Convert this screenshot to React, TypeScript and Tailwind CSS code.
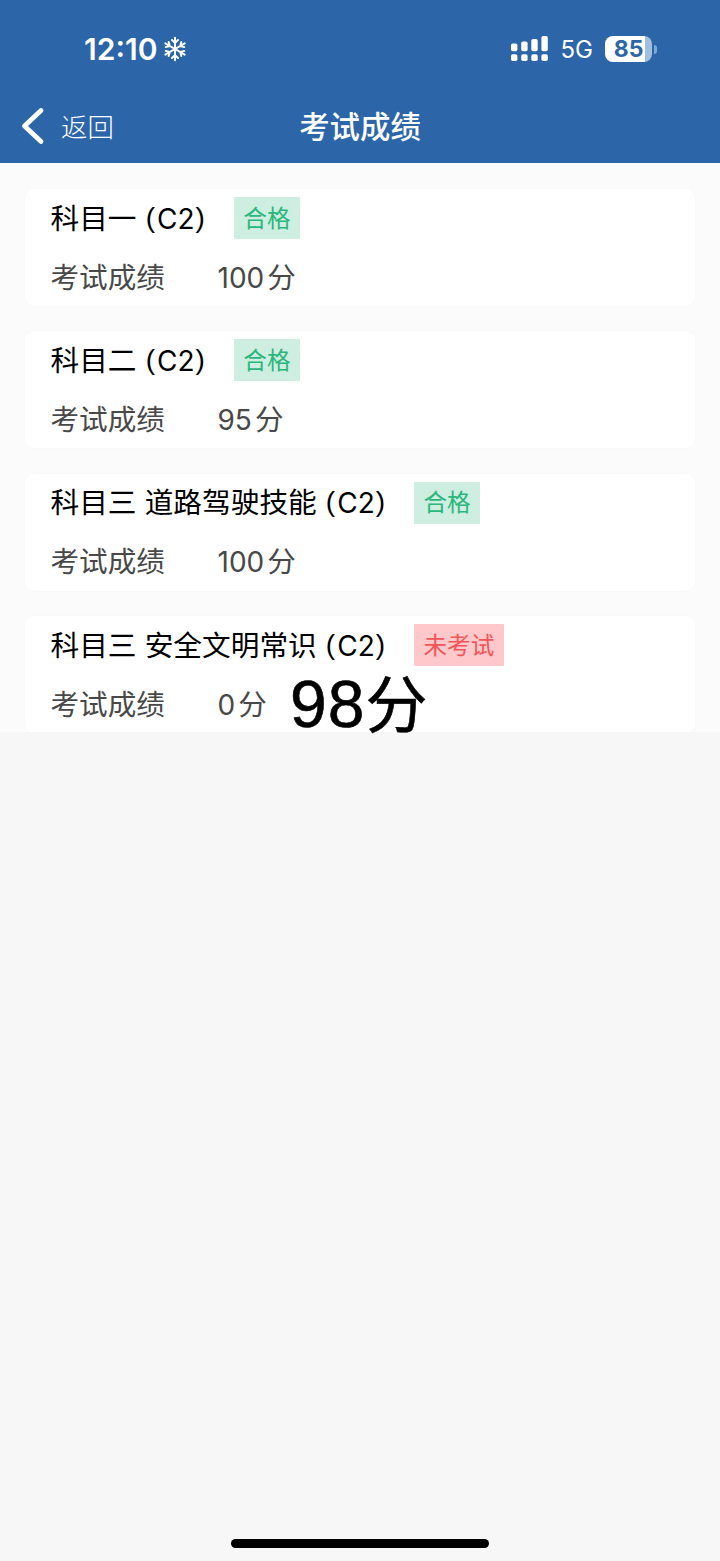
import clsx from "clsx";

type Exam = {
  subject: string;
  score: number;
  status: string;
  passed: boolean;
};

const exams: Exam[] = [
  { subject: "科目一", score: 100, status: "合格", passed: true },
  { subject: "科目二", score: 95, status: "合格", passed: true },
  { subject: "科目三 道路驾驶技能", score: 100, status: "合格", passed: true },
  { subject: "科目三 安全文明常识", score: 0, status: "未考试", passed: false },
];

function SnowflakeIcon() {
  return (
    <svg
      className="ml-[5px] h-[26px] w-[26px]"
      viewBox="0 0 26 26"
      fill="none"
      stroke="currentColor"
      strokeWidth={2}
      strokeLinecap="round"
      strokeLinejoin="round"
    >
      {[0, 60, 120, 180, 240, 300].map((angle) => (
        <path key={angle} d="M13 13V1.8M10 4L13 6.9L16 4" transform={`rotate(${angle} 13 13)`} />
      ))}
    </svg>
  );
}

function SignalIcon() {
  return (
    <svg className="h-[26px] w-[38px]" viewBox="0 0 38 26" fill="currentColor">
      <rect x="0" y="7.5" width="6.4" height="7.8" rx="1.8" />
      <rect x="10.2" y="5.5" width="6.4" height="9.8" rx="1.8" />
      <rect x="20.3" y="2.9" width="6.4" height="12.4" rx="1.8" />
      <rect x="30.4" y="0.1" width="6.4" height="15.2" rx="1.8" />
      <rect x="0" y="18.2" width="6.4" height="6.8" rx="1.8" />
      <rect x="10.2" y="18.2" width="6.4" height="6.8" rx="1.8" />
      <rect x="20.3" y="18.2" width="6.4" height="6.8" rx="1.8" />
      <rect x="30.4" y="18.2" width="6.4" height="6.8" rx="1.8" />
    </svg>
  );
}

function Battery() {
  return (
    <div className="ml-[12px] flex items-center">
      <div className="flex h-[26px] w-[47px] items-center justify-center rounded-[8px] bg-linear-to-r from-white from-85% to-[#a3bfdf] to-85% text-[23px] leading-none font-bold text-[#2c66a9]">
        85
      </div>
      <div className="ml-[2px] h-[9px] w-[3px] rounded-r-full bg-[#7fa8da]" />
    </div>
  );
}

function ExamCard({ exam }: { exam: Exam }) {
  return (
    <div className="h-[117px] shrink-0 rounded-[9px] bg-white px-[25.5px] pt-2 shadow-[0_0_2px_rgba(0,0,0,0.035)]">
      <div className="flex h-[42px] items-center">
        <span className="pt-[2px] text-[28.7px] leading-none whitespace-pre text-black">
          {exam.subject} <span className="relative -top-[2px] ml-px font-['Liberation_Sans'] text-[28px]">(</span>
          <span className="ml-[2px] text-[28px]">C2</span>
          <span className="relative -top-[2px] ml-px font-['Liberation_Sans'] text-[28px]">)</span>
        </span>
        <span
          className={clsx(
            "ml-[29px] flex h-[42px] items-center rounded-[1px] px-[9.5px] pt-px text-[23.6px] leading-none",
            exam.passed ? "bg-[#cdeee1] text-[#2bb67c]" : "bg-[#ffc8ca] text-[#f25558]"
          )}
        >
          {exam.status}
        </span>
      </div>
      <div className="mt-[17px] flex h-[42px] items-center pt-px text-[28.6px] leading-none text-[#484848]">
        <span className="w-[167px] pt-px">考试成绩</span>
        <span className="text-[28px]">{exam.score}</span>
        <span className="ml-[3px] pt-px">分</span>
      </div>
    </div>
  );
}

export default function App() {
  return (
    <div className="flex h-[1561px] w-[720px] flex-col overflow-hidden bg-[#f7f7f7] font-['Inter','Noto_Sans_CJK_SC',sans-serif]">
      <header className="h-[163px] shrink-0 bg-[#2c66a9] text-white">
        <div className="flex h-[98px] items-center justify-between pr-[63px] pl-[84px]">
          <div className="flex items-center">
            <span className="text-[30px] leading-none font-semibold">12:10</span>
            <SnowflakeIcon />
          </div>
          <div className="flex items-center">
            <SignalIcon />
            <span className="ml-[12px] pt-[2px] text-[24px] leading-none">5G</span>
            <Battery />
          </div>
        </div>
        <div className="grid h-[56px] grid-cols-3 items-center">
          <button type="button" className="flex items-center pl-[21px]">
            <svg
              className="h-[38px] w-[24px]"
              viewBox="0 0 24 38"
              fill="none"
              stroke="currentColor"
              strokeWidth={4.8}
              strokeLinecap="round"
              strokeLinejoin="round"
            >
              <path d="M20 3.5L3.5 19L20 34.5" />
            </svg>
            <span className="ml-[16px] pt-[3px] text-[26.4px] leading-none font-light">返回</span>
          </button>
          <h1 className="pt-[2px] text-center text-[30.4px] leading-none font-medium">考试成绩</h1>
        </div>
      </header>

      <main className="relative h-[569px] shrink-0 bg-[#fbfbfb]">
        <div className="flex h-full flex-col gap-[25.4px] overflow-hidden px-[25px] pt-[26px]">
          {exams.map((exam) => (
            <ExamCard key={exam.subject} exam={exam} />
          ))}
        </div>
        {/* large score note laid over the last card */}
        <div className="absolute top-[508px] left-[290px] flex items-center leading-none whitespace-nowrap text-black">
          <span className="font-['Liberation_Sans'] text-[66px] tracking-[1px] [-webkit-text-stroke:0.6px_black]">98</span>
          <span className="pt-[4px] text-[62px] [-webkit-text-stroke:0.6px_black]">分</span>
        </div>
      </main>

      <div className="mx-auto mt-auto mb-[13px] h-[9px] w-[258px] rounded-full bg-black" />
    </div>
  );
}
